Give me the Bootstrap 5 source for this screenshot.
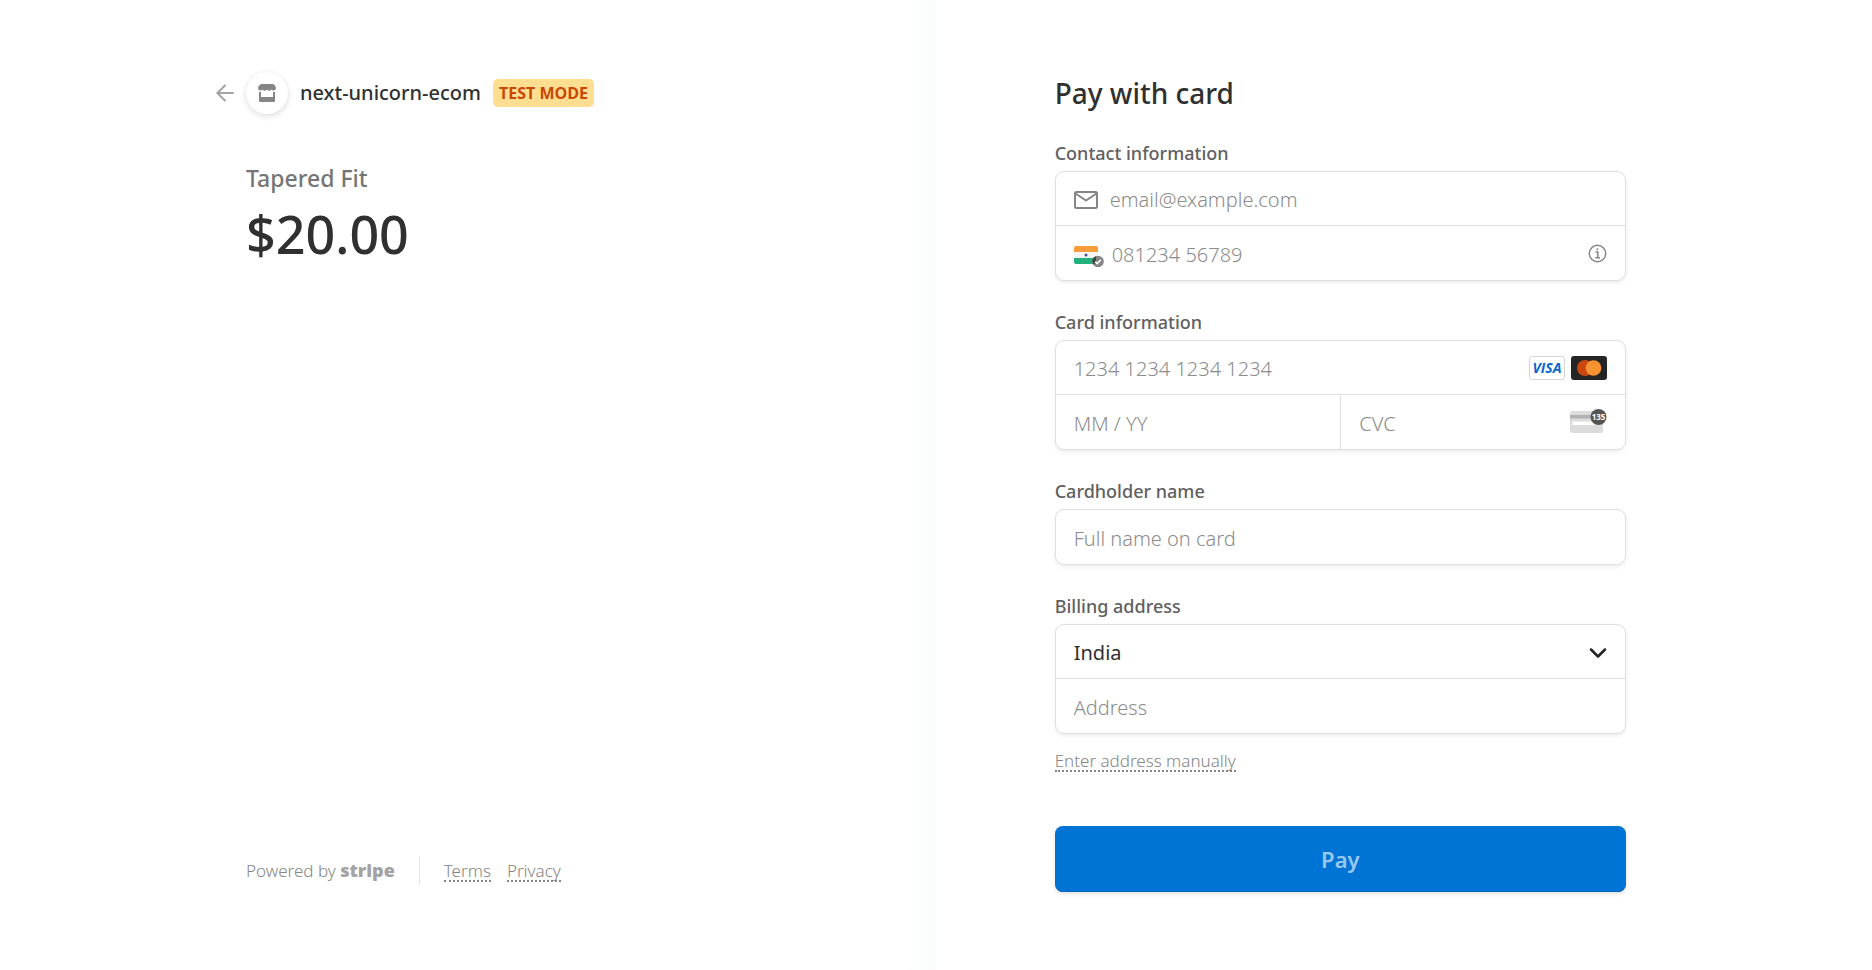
<!DOCTYPE html>
<html lang="en">
<head>
<meta charset="utf-8">
<meta name="viewport" content="width=device-width, initial-scale=1">
<title>next-unicorn-ecom</title>
<link href="https://cdn.jsdelivr.net/npm/bootstrap@5.3.0/dist/css/bootstrap.min.css" rel="stylesheet">
<style>
  body { font-family: "Noto Sans", "Open Sans", sans-serif; color: #303030; background: #fff; }
  .checkout-page { background: linear-gradient(to right, #fff calc(50% - 34px), #fbfcfc 50%, #fff 50%); padding: 72px 24px; }
  .checkout-wrap { max-width: 1380px; column-gap: 17.2%; }
  .pane { flex: 1 1 0; min-width: 320px; }
  .head-row { height: 42px; }
  .back-link { left: -30px; top: 11px; line-height: 0; }
  .shop-icon { width: 42px; height: 42px; box-shadow: 0 2px 6px rgba(0,0,0,.14); }
  .shop-name { font-size: 20px; font-weight: 500; margin-left: 12px; }
  .mode-tag { font-family: "Open Sans", sans-serif; font-size: 16px; font-weight: 700; line-height: 28px; padding: 0 6px; margin-left: 12px; border-radius: 5px; background: #ffde92; color: #c84801; }
  .product-name { font-size: 23px; font-weight: 500; line-height: 32px; color: #757575; margin-top: 48px; }
  .product-price { font-size: 52px; font-weight: 500; line-height: 64px; margin-top: 8px; }
  .foot { font-size: 17px; font-weight: 300; color: #858585; line-height: 30px; padding-bottom: 6px; }
  .brand-word { font-family: "Open Sans", sans-serif; font-size: 18px; font-weight: 800; color: #a3a3a3; }
  .foot-rule { width: 1px; height: 29px; background: #e3e3e3; margin: 0 24px; }
  .dotted-link { color: #858585; text-decoration: none; border-bottom: 2px dotted #858585; line-height: 18px; display: inline-block; font-weight: 300; margin-top: 3px; }
  .pay-title { font-size: 28px; font-weight: 500; line-height: 42px; margin: 0 0 27px; }
  .group-label { display: block; font-size: 18px; font-weight: 500; line-height: 24px; margin-bottom: 6px; color: #606060; }
  .field-set { margin-bottom: 29px; }
  .field-box { border: 1px solid #dfdfdf; border-radius: 9px; box-shadow: 0 2px 4px rgba(0,0,0,.07); background: #fff; }
  .field-row { height: 54px; padding: 3px 18px 0; }
  .field-row.ruled { border-bottom: 1px solid #dfdfdf; }
  .field-row input, .field-row select { border: 0; outline: 0; background: transparent; flex: 1 1 0; min-width: 0; width: 100%; padding: 0; color: #303030; font-size: 20px; line-height: 28px; font-weight: 300; appearance: none; }
  .field-row select { font-weight: 400; }
  .field-row input::placeholder { color: #8c8c8c; opacity: 1; }
  .field-row svg { flex: none; }
  .field-row .trail { margin-bottom: 3px; }
  .cell-right { border-left: 1px solid #dfdfdf; }
  .manual { margin-top: 14px; height: 24px; font-size: 17px; }
  .pay-btn { height: 66px; margin-top: 54px; border: 0; border-radius: 8px; background: #0074d4; color: #99c7ee; font-size: 22px; font-weight: 600; box-shadow: 0 2px 4px rgba(0,0,0,.12), inset 0 -1px 0 #0067bd; }
</style>
</head>
<body>
<div class="checkout-page min-vh-100">
  <div class="checkout-wrap d-flex flex-wrap mx-auto">
    <section class="pane d-flex flex-column">
      <header class="head-row position-relative d-flex align-items-center">
        <a href="#" class="back-link position-absolute" aria-label="Back">
          <svg width="18" height="20" viewBox="0 0 18 20" fill="none" stroke="#a3a3a3" stroke-width="2" stroke-linecap="round" stroke-linejoin="round"><path d="M17 10H1.5M9 2.5L1.3 10L9 17.500"/></svg>
        </a>
        <span class="shop-icon rounded-circle bg-white d-flex align-items-center justify-content-center">
          <svg width="18" height="18" viewBox="0 0 18 18" fill="#858585"><path d="M3 0H15Q17.500 1 18 4Q17.800 6.500 15.500 6.500Q14 6.500 13.500 5.500Q12.700 6.800 11.200 6.800Q9.800 6.800 9 5.500Q8.200 6.800 6.800 6.800Q5.300 6.800 4.500 5.500Q4 6.500 2.500 6.500Q.200 6.500 0 4Q.500 1 3 0Z"/><path d="M1 8H3V13H15V8H17V16.500Q17 18 15.500 18H2.500Q1 18 1 16.500Z"/></svg>
        </span>
        <span class="shop-name">next-unicorn-ecom</span>
        <span class="mode-tag">TEST MODE</span>
      </header>
      <div class="product-name">Tapered Fit</div>
      <div class="product-price">$20.00</div>
      <footer class="foot mt-auto d-flex align-items-center">
        <span>Powered by <span class="brand-word">stripe</span></span>
        <span class="foot-rule"></span>
        <a href="#" class="dotted-link">Terms</a>
        <a href="#" class="dotted-link ms-3">Privacy</a>
      </footer>
    </section>

    <main class="pane">
      <form>
        <h1 class="pay-title">Pay with card</h1>

        <div class="field-set">
          <label class="group-label" for="email">Contact information</label>
          <div class="field-box">
            <div class="field-row ruled d-flex align-items-center">
              <svg class="me-2" width="28" height="20" viewBox="0 0 28 20" fill="none" stroke="#858585" stroke-width="2" stroke-linejoin="round"><rect x="1" y="2" width="22" height="16" rx="1.500"/><path d="M1.500 3.500L12 10.500L22.500 3.500"/></svg>
              <input id="email" type="email" placeholder="email@example.com">
            </div>
            <div class="field-row d-flex align-items-center">
              <svg class="me-2" width="30" height="24" viewBox="0 0 30 24"><rect y="3" width="24" height="18" rx="2" fill="#f5f5f5"/><path d="M0 9V5Q0 3 2 3H22Q24 3 24 5V9Z" fill="#f99d3a"/><path d="M0 15V19Q0 21 2 21H22Q24 21 24 19V15Z" fill="#23b07c"/><circle cx="12" cy="12" r="1.500" fill="#4c4ba0"/><circle cx="24" cy="18.500" r="5.800" fill="#858585"/><path d="M18.300 18.500A5.800 5.800 0 0 1 22 13.200V19L20 21.500A5.800 5.800 0 0 1 18.300 18.500Z" fill="#3c4541"/><path d="M21.300 18.600L23.300 20.500L26.800 16.800" fill="none" stroke="#fff" stroke-width="1.600"/></svg>
              <input id="phone" type="tel" aria-label="Phone number" placeholder="081234 56789" class="phone-input">
              <svg class="trail" width="19" height="19" viewBox="0 0 19 19" fill="none" stroke="#858585" stroke-width="1.500"><circle cx="9.500" cy="9.500" r="8.200"/><path d="M7.500 8H9.800V13.500M7.300 13.700H12"/><circle cx="9.400" cy="5.200" r="1" fill="#858585" stroke="none"/></svg>
            </div>
          </div>
        </div>

        <div class="field-set">
          <label class="group-label" for="number">Card information</label>
          <div class="field-box">
            <div class="field-row ruled d-flex align-items-center">
              <input id="number" type="text" inputmode="numeric" placeholder="1234 1234 1234 1234">
              <svg class="me-1 trail" width="38" height="24" viewBox="0 0 38 24"><rect x=".500" y=".500" width="35" height="23" rx="2.500" fill="#fff" stroke="#d5d5d5"/><text x="18" y="17" text-anchor="middle" font-family="Open Sans" font-size="14" font-weight="700" font-style="italic" fill="#0a66cc">VISA</text></svg>
              <svg class="trail" width="36" height="24" viewBox="0 0 36 24"><rect width="36" height="24" rx="3" fill="#252525"/><circle cx="14" cy="12" r="8" fill="#cb470e"/><circle cx="22.500" cy="12" r="7.800" fill="#f79331"/></svg>
            </div>
            <div class="d-flex">
              <div class="field-row w-50 d-flex align-items-center">
                <input id="expiry" type="text" aria-label="Expiration" placeholder="MM / YY">
              </div>
              <div class="field-row cell-right w-50 d-flex align-items-center">
                <input id="cvc" type="text" aria-label="CVC" placeholder="CVC">
                <svg class="trail" width="37" height="29" viewBox="0 0 37 29"><rect y="3" width="33" height="22" rx="2.500" fill="#dcdcdc"/><path d="M0 7H33V10.500H0Z" fill="#b1b1b1"/><path d="M2.500 13.500H31V17H2.500Z" fill="#fff"/><circle cx="28.500" cy="9" r="8" fill="#555"/><text x="28.500" y="12" text-anchor="middle" font-family="Open Sans" font-size="8" font-weight="700" fill="#fff">135</text></svg>
              </div>
            </div>
          </div>
        </div>

        <div class="field-set">
          <label class="group-label" for="holder">Cardholder name</label>
          <div class="field-box">
            <div class="field-row d-flex align-items-center">
              <input id="holder" type="text" placeholder="Full name on card">
            </div>
          </div>
        </div>

        <div>
          <label class="group-label" for="country">Billing address</label>
          <div class="field-box">
            <div class="field-row ruled d-flex align-items-center">
              <select id="country"><option>India</option></select>
              <svg width="18" height="12" viewBox="0 0 18 12" fill="none" stroke="#222" stroke-width="2.500" stroke-linecap="round" stroke-linejoin="round"><path d="M2 2.500L9 9.500L16 2.500"/></svg>
            </div>
            <div class="field-row d-flex align-items-center">
              <input id="address" type="text" aria-label="Address" placeholder="Address">
            </div>
          </div>
        </div>
        <div class="manual d-flex align-items-center"><a href="#" class="dotted-link">Enter address manually</a></div>
        <button type="button" class="pay-btn w-100">Pay</button>
      </form>
    </main>
  </div>
</div>
</body>
</html>
